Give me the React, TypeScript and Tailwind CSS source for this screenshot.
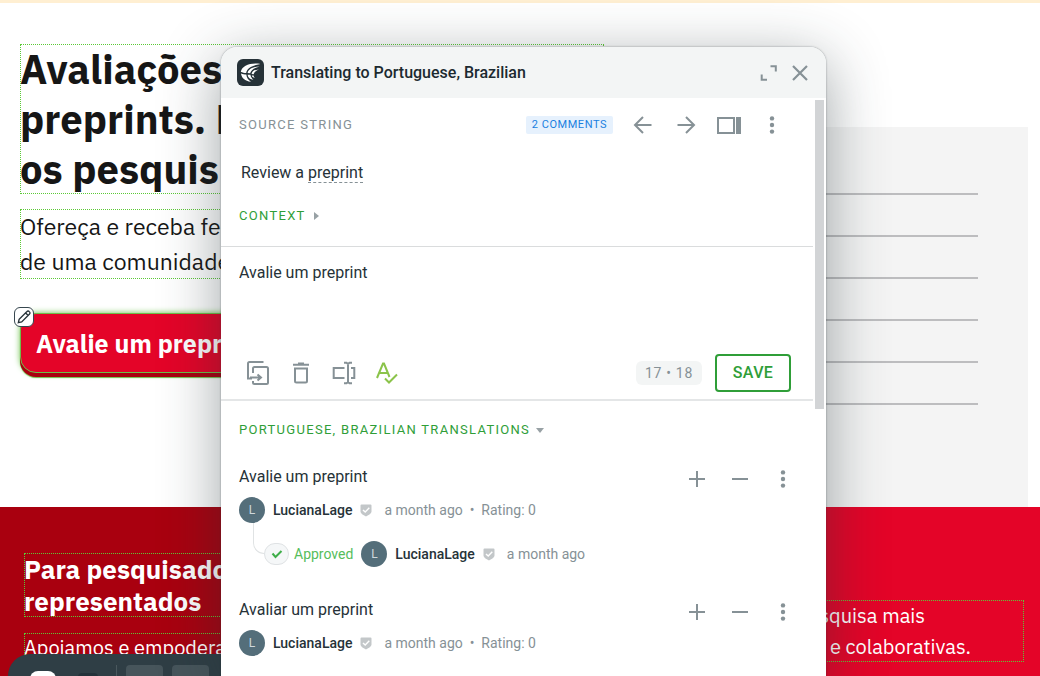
import { useState } from 'react'
import type { ReactNode } from 'react'

interface Translation {
  text: string
  author: string
  date: string
  rating: number
  approvedBy?: string
}

const TRANSLATIONS: Translation[] = [
  { text: 'Avalie um preprint', author: 'LucianaLage', date: 'a month ago', rating: 0, approvedBy: 'LucianaLage' },
  { text: 'Avaliar um preprint', author: 'LucianaLage', date: 'a month ago', rating: 0 },
]

/* Icons */

interface IconProps {
  children: ReactNode
  className?: string
}

function Icon({ children, className = 'size-6' }: IconProps) {
  return (
    <svg
      viewBox="0 0 24 24"
      fill="none"
      stroke="currentColor"
      strokeWidth="2"
      className={`block shrink-0 ${className}`}
      aria-hidden="true"
    >
      {children}
    </svg>
  )
}

function DotsIcon() {
  return (
    <Icon>
      <g fill="currentColor" stroke="none">
        <circle cx="12" cy="5.4" r="2.2" />
        <circle cx="12" cy="12" r="2.2" />
        <circle cx="12" cy="18.6" r="2.2" />
      </g>
    </Icon>
  )
}

function CrowdinLogo() {
  return (
    <svg viewBox="0 0 27 27" className="block size-[27px] shrink-0" aria-hidden="true">
      <rect width="27" height="27" rx="6" fill="#263238" />
      <g fill="#fff">
        <path d="M23.500 5C13 3.400 5 7 3.800 12.800c1.700.9 3.300 1.200 5.400 1.200C9.800 9.300 14.500 6.300 23.500 5z" />
        <path d="M4 14.600c.5 4.400 4 7.700 10 8.200-2.800-1.800-4.300-4-4.700-7.200-2 0-3.600-.3-5.300-1z" />
        <path d="M22.800 7.400c-7 .4-11.600 2.800-12.200 6.700l2.600.2c.7-3.300 3.600-5.300 9.600-6.900z" />
        <path d="M10.600 15.700c.4 2.700 2.400 4.700 5.800 5.100-1.600-1.300-2.700-2.900-3-5z" />
        <path d="M22 10.400c-4.400.3-7 1.600-7.400 4.600l2.100.3c.4-2.200 2-3.700 5.300-4.900z" />
        <path d="M14.800 16.400c.2 1.300 1.200 2.200 3 2.300-.7-.6-1.100-1.300-1.200-2.200z" />
      </g>
    </svg>
  )
}

function VerifiedIcon() {
  return (
    <svg viewBox="0 0 12 13" className="block h-[13px] w-3 shrink-0" aria-hidden="true">
      <path d="M1.500 0.500h9a1 1 0 0 1 1 1v6c0 2.200-3.500 3.900-5.500 5C4 11.400.5 9.700.5 7.500v-6a1 1 0 0 1 1-1z" fill="#c3c7c9" />
      <path d="M3 5.900l2.200 2.200L9.300 3.800" fill="none" stroke="#fff" strokeWidth="1.400" />
    </svg>
  )
}

interface IconButtonProps {
  label: string
  children: ReactNode
}

function IconButton({ label, children }: IconButtonProps) {
  return (
    <button type="button" aria-label={label} className="flex size-6 shrink-0 items-center justify-center">
      {children}
    </button>
  )
}

function Avatar({ name }: { name: string }) {
  return (
    <span className="flex size-[26px] shrink-0 items-center justify-center rounded-full bg-[#546e7a] text-xs text-[#cfd8dc]">
      {name.charAt(0)}
    </span>
  )
}

/* Page that is being translated in context */

// Dotted green frame around a string that can be translated in place
function Translatable({ children, className = '' }: { children: ReactNode; className?: string }) {
  return (
    <div
      className={`whitespace-nowrap text-[#5cc936] outline-1 -outline-offset-1 outline-dotted outline-current ${className}`}
    >
      {children}
    </div>
  )
}

function Hero() {
  return (
    <section className="flex h-[504px] justify-between bg-white pr-3">
      <div className="ml-5 w-[584px] pt-[41px]">
        <Translatable>
          <h1 className="text-[40px] leading-[50px] font-bold text-[#161616]">
            Avaliações
            <br />
            preprints. P
            <br />
            os pesquis
          </h1>
        </Translatable>
        <Translatable className="mt-[15px]">
          <p className="text-[23px] leading-[35px] text-[#161616]">
            Ofereça e receba fe
            <br />
            de uma comunidade
          </p>
        </Translatable>
        <div className="relative mt-[34px] w-[260px]">
          <button
            type="button"
            className="h-[60px] w-full rounded-2xl border border-[#6cc04a] bg-[#e40428] pt-0.5 pl-[15px] text-left text-[25px] font-bold whitespace-nowrap text-white shadow-[0_4px_0_#a9000f,0_5px_1px_#6cc04a,0_0_6px_#6cc04a]"
          >
            Avalie um prepri
          </button>
          <span className="absolute -top-1.5 -left-1.5 flex size-5 items-center justify-center rounded-md border border-[#37474f] bg-white text-[#263238]">
            <Icon className="size-4">
              <path d="M3.500 20.500l1.200-5L16.500 3.700a2.200 2.200 0 0 1 3.200 0l.6.6a2.200 2.200 0 0 1 0 3.200L8.500 19.300zM14.500 6l3.500 3.500" />
            </Icon>
          </span>
        </div>
      </div>
      <div className="mt-[124px] w-[260px] bg-[#f4f4f4] pt-[66px] pr-[50px]">
        {[1, 2, 3, 4, 5, 6].map((line) => (
          <div key={line} className="mb-10 h-0.5 bg-[#bdbdbf]" />
        ))}
      </div>
    </section>
  )
}

function Audience() {
  return (
    <section className="grid h-[170px] grid-cols-2">
      <div className="overflow-hidden bg-[#a9000f] pt-[46px] pl-6">
        <Translatable>
          <h2 className="text-[26px] leading-8 font-bold text-white">
            Para pesquisado
            <br />
            representados
          </h2>
        </Translatable>
        <Translatable className="mt-4">
          <p className="text-[20px] leading-[30px] text-white">Apoiamos e empodera</p>
        </Translatable>
      </div>
      <div className="bg-[#e40428] pt-[93px] pr-4">
        <Translatable>
          <p className="pl-[250px] text-[20px] leading-[31px] text-white">
            na pesquisa mais
            <br />
            juntas e colaborativas.
          </p>
        </Translatable>
      </div>
    </section>
  )
}

function PreviewToolbar() {
  return (
    <div className="absolute bottom-0 left-2 flex h-[22px] w-[300px] rounded-tl-[22px] bg-[#2f3e45] pt-[11px] pl-[22px]">
      <span className="mt-1.5 h-4 w-[26px] rounded-t-lg bg-white" />
      <span className="mt-2 ml-[22px] h-4 w-5 rounded-t bg-[#24323a]" />
      <span className="ml-[18px] w-px bg-[#4a585e]" />
      <span className="ml-[9px] w-[37px] rounded-t bg-[#47555b]" />
      <span className="ml-[9px] w-[37px] rounded-t bg-[#47555b]" />
    </div>
  )
}

/* Translation dialog */

function DialogHeader() {
  return (
    <header className="flex h-[51px] items-center bg-[#f3f5f5] pr-[14px] pl-4">
      <CrowdinLogo />
      <h2 className="ml-[7px] flex-1 text-base font-medium text-[#1c2a30]">
        Translating to Portuguese, Brazilian
      </h2>
      <div className="flex gap-[7px] text-[#869196]">
        <IconButton label="Expand">
          <Icon>
            <path d="M13.500 5.200h5.300v5.300M4.700 13.500v5.300h5.300" />
          </Icon>
        </IconButton>
        <IconButton label="Close">
          <Icon>
            <path d="M5 5l14 14M19 5L5 19" strokeWidth="2.200" />
          </Icon>
        </IconButton>
      </div>
    </header>
  )
}

function SourceString() {
  return (
    <section className="h-[149px] border-b border-[#dadcdd] pt-[15px] pl-[18px]">
      <div className="flex h-6 items-center text-[#869196]">
        <h3 className="flex-1 text-[13px] tracking-widest uppercase">Source string</h3>
        <button type="button" className="h-[18px] rounded-xs bg-[#e6f1fd] px-1.5 text-[11px] tracking-wider text-[#1a80e0] uppercase">
          2 Comments
        </button>
        <div className="mr-[29px] ml-[18px] flex gap-[19px]">
          <IconButton label="Previous string">
            <Icon>
              <path d="M20.500 12H4.500M12 4l-8 8 8 8" />
            </Icon>
          </IconButton>
          <IconButton label="Next string">
            <Icon>
              <path d="M3.500 12h16M12 4l8 8-8 8" />
            </Icon>
          </IconButton>
          <IconButton label="Side panel">
            <svg viewBox="0 0 24 17" className="block h-[17px] w-6" aria-hidden="true">
              <rect x="1" y="1" width="16" height="15" fill="none" stroke="currentColor" strokeWidth="2" />
              <rect x="19" width="5" height="17" fill="currentColor" />
            </svg>
          </IconButton>
          <IconButton label="More">
            <DotsIcon />
          </IconButton>
        </div>
      </div>
      <p className="mt-6 ml-0.5 text-base leading-6 text-[#263238]">
        Review a <span className="border-b border-dashed border-[#869196]">preprint</span>
      </p>
      <button type="button" className="mt-[19px] flex h-6 items-center gap-2 text-[13px] tracking-widest text-[#2f9e38] uppercase">
        Context
        <svg viewBox="0 0 5 8" className="h-2 w-[5px]" aria-hidden="true">
          <path d="M0 0l5 4-5 4z" fill="#98a1a5" />
        </svg>
      </button>
    </section>
  )
}

function TranslationEditor() {
  const [value, setValue] = useState('Avalie um preprint')

  return (
    <section className="flex h-[154px] flex-col border-b-2 border-[#e4e6e7] pl-[18px]">
      <textarea
        aria-label="Translation"
        value={value}
        onChange={(e) => setValue(e.target.value)}
        className="block h-[107px] w-full resize-none pt-[14px] text-base leading-6 text-[#263238] outline-none"
      />
      <div className="flex h-[38px] items-center pr-[22px] pl-[7px] text-[#869196]">
        <div className="flex flex-1 gap-[19px]">
          <IconButton label="Copy source">
            <Icon>
              <path d="M17.500 1H3.500A1.500 1.500 0 0 0 2 2.500V17.500h4" />
              <path d="M7 12V7.500A1.500 1.500 0 0 1 8.500 6h12A1.500 1.500 0 0 1 22 7.500v14a1.500 1.500 0 0 1-1.500 1.500h-12A1.500 1.500 0 0 1 7 21.500V20M4 16.500h10M11.500 13.500l3.500 3-3.500 3" />
            </Icon>
          </IconButton>
          <IconButton label="Clear translation">
            <Icon>
              <path d="M6 7.500h12V20a1.500 1.500 0 0 1-1.500 1.500h-9A1.500 1.500 0 0 1 6 20zM4 3.800h16M9 2.500h6" />
            </Icon>
          </IconButton>
          <IconButton label="Select text">
            <Icon>
              <path d="M12.500 7H1.700v10h10.800M19 7h3.300v10H19M16 2v20M12 1.700h2.500L16 3l1.500-1.300H20M12 22.300h2.500L16 21l1.500 1.300H20" />
            </Icon>
          </IconButton>
          <IconButton label="Spell check">
            <Icon className="size-6 text-[#8bc34a]">
              <path d="M2 17L8 2.500h1L14.500 16M4.300 12h8.400M10 17.500l4 4 8-8" />
            </Icon>
          </IconButton>
        </div>
        <span className="flex h-6 items-center rounded-md bg-[#f3f5f5] px-[9px] text-sm tracking-wider">17 • 18</span>
        <button
          type="button"
          className="ml-[13px] h-[38px] w-[76px] rounded border-2 border-[#2f9e38] text-base font-medium tracking-wide text-[#2f9e38] uppercase"
        >
          Save
        </button>
      </div>
    </section>
  )
}

function TranslationItem({ translation }: { translation: Translation }) {
  const { text, author, date, rating, approvedBy } = translation

  return (
    <li className={approvedBy ? 'h-[133px]' : ''}>
      <div className="flex items-start justify-between pr-[18px]">
        <p className="text-base leading-6 text-[#263238]">{text}</p>
        <div className="mt-0.5 flex gap-[19px] text-[#869196]">
          <IconButton label="Vote up">
            <Icon>
              <path d="M12 4v16M4 12h16" />
            </Icon>
          </IconButton>
          <IconButton label="Vote down">
            <Icon>
              <path d="M4 12h16" />
            </Icon>
          </IconButton>
          <IconButton label="More">
            <DotsIcon />
          </IconButton>
        </div>
      </div>
      <div className="mt-1.5 flex items-center text-sm whitespace-nowrap text-[#869196]">
        <Avatar name={author} />
        <span className="mx-2 font-medium text-[#263238]">{author}</span>
        <VerifiedIcon />
        <span className="ml-3">
          {date}&nbsp; •&nbsp; Rating: {rating}
        </span>
      </div>
      {approvedBy && (
        <div className="ml-[14px] flex text-sm whitespace-nowrap text-[#869196]">
          <span className="h-[31px] w-[11px] rounded-bl-xl border-b border-l border-[#e0e3e4]" />
          <div className="mt-[18px] flex items-center">
            <span className="flex h-[22px] w-[25px] items-center justify-center rounded-full border border-[#dfe2e4] bg-[#f5f7f8] text-[#3fae49]">
              <Icon className="size-3">
                <path d="M3 11l6 7L21 6" strokeWidth="4" />
              </Icon>
            </span>
            <span className="mr-2 ml-[5px] text-[#56bd5b]">Approved</span>
            <Avatar name={approvedBy} />
            <span className="mx-2 font-medium text-[#263238]">{approvedBy}</span>
            <VerifiedIcon />
            <span className="ml-3">{date}</span>
          </div>
        </div>
      )}
    </li>
  )
}

function TranslationDialog() {
  return (
    <div
      role="dialog"
      aria-label="Translation editor"
      className="absolute top-[47px] bottom-0 left-[221px] flex w-[605px] flex-col overflow-hidden rounded-t-2xl bg-white font-[Roboto,sans-serif] shadow-[0_0_2px_rgba(38,50,56,0.5),0_14px_60px_rgba(38,50,56,0.45)]"
    >
      <DialogHeader />
      <div className="flex flex-1">
        <div className="flex-1">
          <SourceString />
          <TranslationEditor />
          <section className="pt-[17px] pl-[18px]">
            <button type="button" className="flex h-6 items-center gap-1.5 text-[13px] tracking-widest text-[#2f9e38] uppercase">
              Portuguese, Brazilian translations
              <svg viewBox="0 0 8 5" className="h-[5px] w-2" aria-hidden="true">
                <path d="M0 0h8L4 5z" fill="#98a1a5" />
              </svg>
            </button>
            <ul className="mt-[23px]">
              {TRANSLATIONS.map((translation) => (
                <TranslationItem key={translation.text} translation={translation} />
              ))}
            </ul>
          </section>
        </div>
        <div className="mx-0.5 mt-0.5 h-[309px] w-[9px] bg-[#d2d4d6]" />
      </div>
    </div>
  )
}

export default function App() {
  return (
    <main className="relative h-screen overflow-hidden bg-white font-['IBM_Plex_Sans','Noto_Sans',sans-serif]">
      <div className="h-[3px] bg-[#ffefd2]" />
      <Hero />
      <Audience />
      <PreviewToolbar />
      <TranslationDialog />
    </main>
  )
}
